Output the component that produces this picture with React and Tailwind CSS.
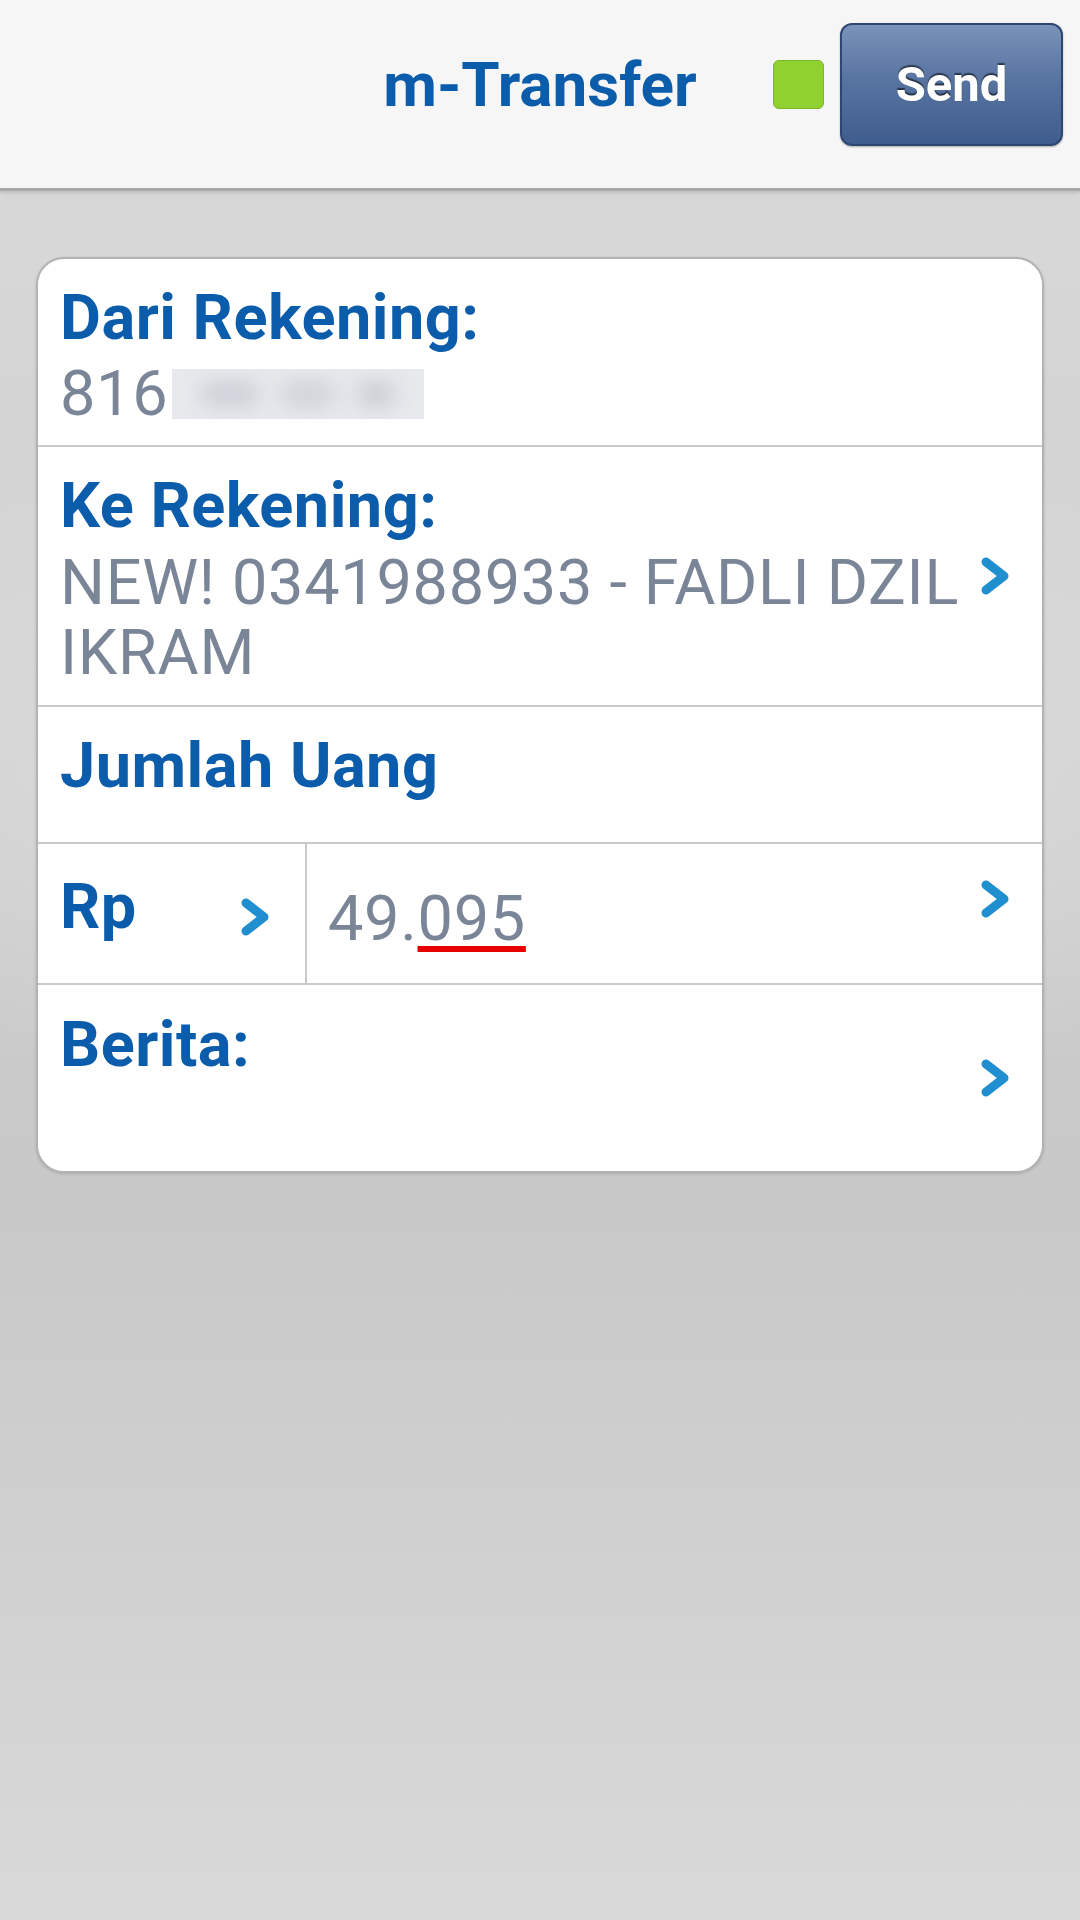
import React from 'react'

function Chevron({ className = '' }) {
  return (
    <svg width="32" height="42" viewBox="0 0 32 42" className={className}>
      <path
        d="M7 7 L25 21 L7 35"
        fill="none"
        stroke="#1f8fd0"
        strokeWidth="9"
        strokeLinecap="round"
        strokeLinejoin="round"
      />
    </svg>
  )
}

function Header() {
  return (
    <header className="relative z-10 h-[191px] border-b-[3px] border-[#a9a9a9] bg-[#f6f6f6] pt-[23px] shadow-[0_2px_4px_rgba(0,0,0,0.12)]">
      <div className="grid h-[123px] grid-cols-[1fr_auto_1fr] items-center">
        <div />
        <h1 className="text-[62px] font-bold leading-none text-[#0b5cab]">m-Transfer</h1>
        <div className="flex items-center justify-end pr-[17px]">
          <div className="mr-[16px] h-[49px] w-[51px] rounded-[6px] border border-[#7bb726] bg-[#8fd12e]" />
          <button className="flex h-[123px] w-[223px] items-center justify-center rounded-[12px] border-2 border-[#2d4771] bg-[linear-gradient(180deg,#7a93b9_0%,#5874a1_45%,#3e5c8d_100%)] text-[49px] font-bold text-white shadow-[0_1px_2px_rgba(0,0,0,0.3)] [text-shadow:0_-2px_1px_rgba(0,0,0,0.55)]">
            Send
          </button>
        </div>
      </div>
    </header>
  )
}

function Label({ children }) {
  return <p className="text-[63px] font-bold leading-[70px] tracking-[0.5px] text-[#0b5cab]">{children}</p>
}

function Value({ children, className = '' }) {
  return <p className={`text-[63px] leading-[70px] tracking-[0.7px] text-[#7a8597] ${className}`}>{children}</p>
}

export default function App() {
  return (
    <div className="flex h-[1920px] flex-col font-[Roboto,sans-serif]">
      <Header />
      <main className="flex-1 bg-[radial-gradient(ellipse_1500px_520px_at_50%_560px,rgba(255,255,255,0.35),rgba(255,255,255,0)_70%),linear-gradient(180deg,#d8d8d8_0%,#cfcfcf_30%,#c8c8c8_58%,#d9d9d9_100%)] px-[36px] pt-[66px]">
        <div className="overflow-hidden rounded-[28px] border-2 border-[#b3b3b3] bg-white shadow-[0_1px_3px_rgba(0,0,0,0.15)]">
          {/* dari rekening */}
          <div className="h-[188px] border-b-2 border-[#c9c9c9] pl-[22px] pt-[24px]">
            <Label>Dari Rekening:</Label>
            <div className="mt-[6px] flex items-center">
              <Value>816</Value>
              <div className="ml-[4px] flex h-[50px] w-[252px] items-center justify-around overflow-hidden bg-[#e8e9ed] px-[18px]">
                <span className="h-[26px] w-[60px] rounded-full bg-[#cdd0d7] blur-[10px]" />
                <span className="h-[26px] w-[56px] rounded-full bg-[#d0d3d9] blur-[10px]" />
                <span className="h-[26px] w-[40px] rounded-full bg-[#cbced5] blur-[10px]" />
              </div>
            </div>
          </div>

          {/* ke rekening */}
          <div className="flex h-[260px] border-b-2 border-[#c9c9c9] pl-[22px] pr-[31px]">
            <div className="flex-1 pt-[24px]">
              <Label>Ke Rekening:</Label>
              <Value className="mt-[7px] pr-[10px]">NEW! 0341988933 - FADLI DZIL IKRAM</Value>
            </div>
            <Chevron className="self-center" />
          </div>

          {/* jumlah */}
          <div className="h-[137px] border-b-2 border-[#c9c9c9] pl-[22px] pt-[24px]">
            <Label>Jumlah Uang</Label>
          </div>

          <div className="flex h-[141px] border-b-2 border-[#c9c9c9]">
            <div className="flex w-[269px] shrink-0 items-start justify-between border-r-2 border-[#c9c9c9] pl-[22px] pr-[34px] pt-[28px]">
              <Label>Rp</Label>
              <Chevron className="mt-[24px]" />
            </div>
            <div className="flex flex-1 items-start justify-between pl-[21px] pr-[31px]">
              <Value className="pt-[40px]">
                49.<span className="underline decoration-[#e60000] decoration-[6px] underline-offset-[6px]">095</span>
              </Value>
              <Chevron className="mt-[34px]" />
            </div>
          </div>

          {/* berita */}
          <div className="flex h-[186px] pl-[22px] pr-[31px]">
            <div className="flex-1 pt-[25px]">
              <Label>Berita:</Label>
            </div>
            <Chevron className="self-center" />
          </div>
        </div>
      </main>
    </div>
  )
}
